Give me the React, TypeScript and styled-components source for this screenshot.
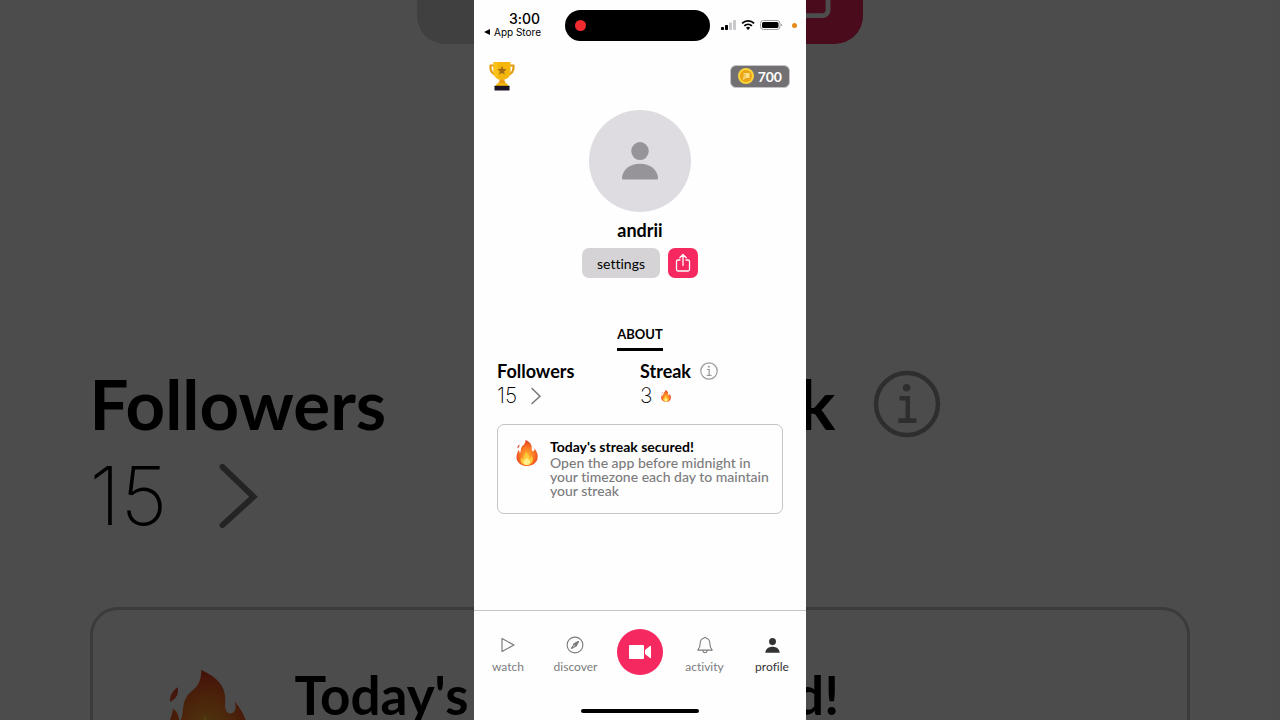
import React from "react";
import styled, { createGlobalStyle } from "styled-components";

const colors = {
  white: '#fefefe',
  black: '#000000',
  pink: '#f5285f',
  lightGray: '#d5d3d6',
  avatar: '#dedce0',
  gray: '#7b7b7d',
  border: '#c4c4c6',
  dark: '#333335',
}

interface IconProps {
  size: number;
}

const TrophyIcon: React.FC = () => (
  <svg width="28" height="30" viewBox="0 0 28 30" aria-hidden="true">
    <path d="M7 4.500H2.600c-.6 5 1.200 8.500 6.400 9.500M21 4.500h4.400c.6 5-1.200 8.500-6.400 9.500" fill="none" stroke="#e39a12" strokeWidth="2.200" />
    <path d="M5.500 1h17v9.500c0 5.500-3.500 8.500-8.500 8.500s-8.500-3-8.500-8.500z" fill="#f5b70b" />
    <path d="M5.500 1h4v16.500c-2.800-1.500-4-4-4-7z" fill="#f9c31a" />
    <path d="M11.500 18.500h5c0 2 .8 3.500 3 5.500h-11c2.200-2 3-3.500 3-5.500z" fill="#ec9c11" />
    <path d="M9 22.500h10l1.500 2.500h-13z" fill="#f7bd0b" />
    <path d="M14 5l1.300 3 3.200.3-2.400 2.100.7 3.200-2.800-1.700-2.800 1.700.7-3.200-2.400-2.100 3.200-.3z" fill="#a36b13" />
    <rect x="6.500" y="24.700" width="15" height="4.800" rx=".6" fill="#1d1326" />
  </svg>
)

const CoinIcon: React.FC = () => (
  <svg width="16" height="16" viewBox="0 0 16 16" aria-hidden="true">
    <circle cx="8" cy="8" r="8" fill="#fbd33d" />
    <circle cx="8" cy="8" r="6" fill="#eaa414" />
    <path d="M5.500 5h6v5h-3.500l-3 2z" fill="#fbe08a" />
    <path d="M4.500 7h3.500M4.500 9h3" stroke="#eaa414" strokeWidth=".8" />
  </svg>
)

const PersonIcon: React.FC<IconProps> = ({ size }) => (
  <svg width={size} height={size} viewBox="0 0 40 40" fill="currentColor" aria-hidden="true">
    <ellipse cx="20" cy="9.500" rx="9.200" ry="9.500" />
    <path d="M3 39.500C1.300 39.500.9 38.500 1.100 37 2.300 29 9.300 23 20 23S37.700 29 38.900 37c.2 1.500-.2 2.500-1.900 2.500z" />
  </svg>
)

const ShareIcon: React.FC<IconProps> = ({ size }) => (
  <svg width={size} height={size} viewBox="0 0 20 20" fill="none" stroke="currentColor" strokeWidth="1.300" strokeLinecap="round" strokeLinejoin="round" aria-hidden="true">
    <path d="M7 7H5A1.500 1.500 0 0 0 3.500 8.500v8A1.500 1.500 0 0 0 5 18h10a1.500 1.500 0 0 0 1.500-1.500v-8A1.500 1.500 0 0 0 15 7H13" />
    <path d="M10 12.500V1.500M6.800 4.700L10 1.500l3.200 3.200" />
  </svg>
)

const ChevronIcon: React.FC<IconProps> = ({ size }) => (
  <svg width={size} height={size} viewBox="0 0 18 18" fill="none" stroke="#77777a" strokeWidth="1.500" strokeLinecap="round" aria-hidden="true">
    <path d="M5 1.500L13 9.200l-8 7.300" />
  </svg>
)

const InfoIcon: React.FC<IconProps> = ({ size }) => (
  <svg width={size} height={size} viewBox="0 0 18 18" fill="none" stroke="#9a9a9d" strokeWidth="1.200" aria-hidden="true">
    <circle cx="9" cy="9" r="8.200" />
    <path d="M7 7.500h2.200v5.700M6.700 13.400h4.800" />
    <circle cx="8.900" cy="4.700" r="1" fill="#9a9a9d" stroke="none" />
  </svg>
)

const FlameIcon: React.FC<IconProps & { id: string }> = ({ size, id }) => (
  <svg width={size} height={size} viewBox="0 0 26 26" aria-hidden="true">
    <defs>
      <radialGradient id={id} cx="50%" cy="60%" r="62%">
        <stop offset="0" stopColor="#ffb52e" />
        <stop offset=".5" stopColor="#fb7a24" />
        <stop offset="1" stopColor="#dd3420" />
      </radialGradient>
    </defs>
    <path
      d="M11.500 0c5 2.200 6.600 5 6.200 8.700-.1 1.800.6 2.700 1.500 2.600 1.200-.2 1.500-1.500 1-3.100 2.600 3 3.900 6.500 3.400 9.900-.7 4.700-4.800 7.900-10.300 7.900-6 0-10.600-3.500-10.800-8.600-.1-3 1.300-4.600 1.700-7.400 1.200 1 1.600 2.100 1.600 3.500 1.500-1.600.3-4 2-6.700C9.300 4.800 11.500 4.500 11.500 0z"
      fill={`url(#${id})`}
    />
    <path d="M5.400 4.500c.3 2-.5 3-2 3.800-.1-1.600.6-2.900 2-3.800z" fill="#e04a2a" />
    <path d="M12.600 11.500c.4 3.300 3.300 3.500 3.300 6.300 1-.5 1.500-1.200 1.700-2.300 2.400 3.800 1.500 8.700-4.500 9.700-5.600-.2-7.800-3.700-5.700-8 .5 1 .9 1.500 1.700 1.800-.4-3.400 2.900-4.900 3.500-7.500z" fill="#ffc83a" />
    <path d="M13 17.500c1 1.800 3 2.300 3 4.500 0 2-1.500 3-3.300 3S9.400 23.800 9.400 21.800c0-2.100 2.800-2.200 3.600-4.300z" fill="#fff08a" />
  </svg>
)

const StatusIcons: React.FC = () => (
  <svg width="62" height="12" viewBox="0 0 62 12" aria-hidden="true">
    <rect x="0" y="8" width="3" height="3" rx=".7" />
    <rect x="4" y="6" width="3" height="5" rx=".7" />
    <rect x="8" y="3.500" width="3" height="7.500" rx=".7" fill="#c9c9cb" />
    <rect x="12" y="1" width="3" height="10" rx=".7" fill="#c9c9cb" />
    <g fill="none" stroke="#000" strokeWidth="1.800">
      <path d="M21.100 4.300a8.600 8.600 0 0 1 12 0M23.300 6.800a5.500 5.500 0 0 1 7.600 0" />
    </g>
    <path d="M27.100 11l-2.100-2.200a3 3 0 0 1 4.200 0z" />
    <rect x="39.500" y="1.500" width="19.500" height="9" rx="3" fill="none" stroke="#9c9c9f" />
    <rect x="41" y="3" width="16.500" height="6" rx="1.600" />
    <path d="M60.200 4.500c1.200.5 1.200 2.500 0 3z" fill="#9c9c9f" />
  </svg>
)

const PlayIcon: React.FC = () => (
  <svg width="18" height="18" viewBox="0 0 18 18" fill="none" stroke="currentColor" strokeWidth="1.200" strokeLinejoin="round" aria-hidden="true">
    <path d="M3 2.500v13L15 9z" />
  </svg>
)

const CompassIcon: React.FC = () => (
  <svg width="18" height="18" viewBox="0 0 18 18" fill="none" stroke="currentColor" strokeWidth="1.100" strokeLinejoin="round" aria-hidden="true">
    <circle cx="9" cy="9" r="7.900" />
    <path d="M12.500 5.500L10 10 5.500 12.500 8 8z" />
    <path d="M12.500 5.500L10 10 8 8z" fill="currentColor" />
  </svg>
)

const BellIcon: React.FC = () => (
  <svg width="18" height="18" viewBox="0 0 18 18" fill="none" stroke="currentColor" strokeWidth="1.100" strokeLinejoin="round" aria-hidden="true">
    <path d="M9 1.200c-.8 0-1.200.5-1.300 1.100C5.500 2.900 4.200 4.700 4.200 7.200c0 3.900-.9 5.100-2.400 6.900h14.400c-1.500-1.800-2.400-3-2.400-6.900 0-2.500-1.300-4.300-3.500-4.900-.1-.6-.5-1.100-1.300-1.100z" />
    <path d="M6.900 14.300c.1 3.200 4.100 3.200 4.200 0" />
  </svg>
)

const CameraIcon: React.FC = () => (
  <svg width="24" height="16" viewBox="0 0 24 16" fill="#fff" aria-hidden="true">
    <rect x="1" y="1" width="15" height="14" rx="1" />
    <path d="M17 6l5-4c.6-.4 1-.2 1 .4v11.200c0 .6-.4.8-1 .4l-5-4z" />
  </svg>
)

const Backdrop: React.FC = () => (
  <BackdropContainer aria-hidden="true">
    <BackdropActions>
      <BackdropSettings />
      <BackdropShare>
        <ShareIcon size={74} />
      </BackdropShare>
    </BackdropActions>
    <BackdropStats>
      <div>
        <BackdropTitle>Followers</BackdropTitle>
        <BackdropValue>
          15
          <ChevronIcon size={70} />
        </BackdropValue>
      </div>
      <div>
        <BackdropTitle>
          Streak
          <InfoIcon size={68} />
        </BackdropTitle>
      </div>
    </BackdropStats>
    <BackdropCard>
      <FlameIcon size={100} id="flame-backdrop" />
      <BackdropCardTitle>Today's streak secured!</BackdropCardTitle>
    </BackdropCard>
  </BackdropContainer>
)

export default function App() {
  return (
    <Page>
      <GlobalStyle />
      <Backdrop />
      <Phone>
        <StatusBar>
          <StatusLeft>
            <Time>3:00</Time>
            <BackLink href="#app-store">
              <BackArrow viewBox="0 0 6 6" aria-hidden="true"><path d="M6 0v6L0 3z" /></BackArrow>
              App Store
            </BackLink>
          </StatusLeft>
          <Island><RecordDot /></Island>
          <StatusRight>
            <StatusIcons />
            <MicDot />
          </StatusRight>
        </StatusBar>

        <TopBar>
          <IconButton aria-label="Leaderboard"><TrophyIcon /></IconButton>
          <CoinBadge><CoinIcon />700</CoinBadge>
        </TopBar>

        <Profile>
          <Avatar><PersonIcon size={38} /></Avatar>
          <Username>andrii</Username>
          <Actions>
            <SettingsButton>settings</SettingsButton>
            <ShareButton aria-label="Share profile"><ShareIcon size={20} /></ShareButton>
          </Actions>
        </Profile>

        <Tabs>
          <Tab>ABOUT</Tab>
        </Tabs>

        <Stats>
          <div>
            <StatTitle>Followers</StatTitle>
            <StatValue $gap={10}>
              15
              <ChevronIcon size={18} />
            </StatValue>
          </div>
          <div>
            <StatTitle>
              Streak
              <IconButton aria-label="About streaks"><InfoIcon size={18} /></IconButton>
            </StatTitle>
            <StatValue $gap={8}>
              3
              <FlameIcon size={12} id="flame-small" />
            </StatValue>
          </div>
        </Stats>

        <StreakCard>
          <FlameIcon size={26} id="flame-card" />
          <div>
            <CardTitle>Today's streak secured!</CardTitle>
            <CardText>Open the app before midnight in your timezone each day to maintain your streak</CardText>
          </div>
        </StreakCard>

        <BottomNav>
          <NavItem href="#watch"><PlayIcon />watch</NavItem>
          <NavItem href="#discover"><CompassIcon />discover</NavItem>
          <RecordButton aria-label="Record"><CameraIcon /></RecordButton>
          <NavItem href="#activity"><BellIcon />activity</NavItem>
          <NavItem href="#profile" $active>
            <NavIconBox><PersonIcon size={15} /></NavIconBox>
            profile
          </NavItem>
        </BottomNav>
        <HomeIndicator />
      </Phone>
    </Page>
  )
}

const GlobalStyle = createGlobalStyle`
  * {
    box-sizing: border-box;
  }

  body {
    margin: 0;
    background-color: ${colors.black};
    font-family: Lato, "Liberation Sans", sans-serif;
    font-variant-ligatures: none;
    color: ${colors.black};
  }

  h1, h2, h3, p {
    margin: 0;
  }

  button {
    border: 0;
    padding: 0;
    background: none;
    font-family: inherit;
    font-variant-ligatures: none;
    color: inherit;
    cursor: pointer;
  }

  a {
    color: inherit;
    text-decoration: none;
  }

  svg {
    display: block;
    flex-shrink: 0;
  }
`

const Page = styled.div`
  position: relative;
  display: flex;
  justify-content: center;
  min-height: 100vh;
  overflow: hidden;
`

const BackdropContainer = styled.div`
  position: absolute;
  inset: 0;
  overflow: hidden;
  background-color: #fafafa;
  opacity: 0.3;
`

const BackdropActions = styled.div`
  display: flex;
  justify-content: center;
  gap: 28px;
  margin-top: -72px;
`

const BackdropSettings = styled.div`
  width: 300px;
  height: 116px;
  border-radius: 28px;
  background-color: ${colors.lightGray};
`

const BackdropShare = styled.div`
  display: flex;
  align-items: center;
  justify-content: center;
  width: 118px;
  height: 116px;
  border-radius: 28px;
  background-color: ${colors.pink};
  color: ${colors.white};
`

const BackdropStats = styled.div`
  display: grid;
  grid-template-columns: 1fr 1fr;
  margin: 318px 7% 0;
`

const BackdropTitle = styled.div`
  display: flex;
  align-items: center;
  gap: 38px;
  font-size: 69px;
  line-height: 84px;
  font-weight: 700;
`

const BackdropValue = styled.div`
  display: flex;
  align-items: center;
  gap: 36px;
  font-family: Inter, sans-serif;
  font-size: 81px;
  line-height: 100px;
  font-weight: 200;
`

const BackdropCard = styled.div`
  display: flex;
  gap: 38px;
  height: 346px;
  margin: 61px 7% 0;
  padding: 60px 64px;
  border: 3px solid ${colors.border};
  border-radius: 28px;
`

const BackdropCardTitle = styled.div`
  font-size: 53px;
  line-height: 50px;
  font-weight: 700;
  white-space: nowrap;
`

const Phone = styled.main`
  position: relative;
  display: flex;
  flex-direction: column;
  width: 100%;
  max-width: 332px;
  min-height: 100vh;
  background-color: ${colors.white};
`

const StatusBar = styled.div`
  display: grid;
  grid-template-columns: 91px 1fr 96px;
  align-items: center;
  height: 50px;
`

const StatusLeft = styled.div`
  display: flex;
  flex-direction: column;
  padding-left: 10px;
`

const Time = styled.div`
  padding-left: 25px;
  font-family: Inter, sans-serif;
  font-size: 14px;
  line-height: 14px;
  font-weight: 500;
`

const BackLink = styled.a`
  display: flex;
  align-items: center;
  gap: 4px;
  font-family: Inter, sans-serif;
  font-size: 10px;
  line-height: 12px;
  white-space: nowrap;
`

const BackArrow = styled.svg`
  width: 6px;
  height: 6px;
`

const Island = styled.div`
  display: flex;
  align-items: center;
  height: 31px;
  padding-left: 10px;
  border-radius: 16px;
  background-color: ${colors.black};
`

const RecordDot = styled.span`
  width: 11px;
  height: 11px;
  border-radius: 50%;
  background-color: #ef2b30;
`

const StatusRight = styled.div`
  display: flex;
  align-items: center;
  justify-content: flex-end;
  gap: 9px;
  padding-right: 9px;
`

const MicDot = styled.span`
  width: 5px;
  height: 5px;
  border-radius: 50%;
  background-color: #e88a1a;
`

const TopBar = styled.header`
  display: flex;
  align-items: center;
  justify-content: space-between;
  height: 52px;
  padding: 0 16px 0 14px;
`

const IconButton = styled.button`
  display: flex;
`

const CoinBadge = styled.div`
  display: flex;
  align-items: center;
  gap: 4px;
  height: 23px;
  padding: 0 7px;
  border: 1px solid ${colors.border};
  border-radius: 6px;
  background-color: #727073;
  font-size: 14px;
  font-weight: 700;
  color: ${colors.white};
`

const Profile = styled.section`
  display: flex;
  flex-direction: column;
  align-items: center;
  padding-top: 8px;
`

const Avatar = styled.div`
  display: flex;
  align-items: center;
  justify-content: center;
  width: 102px;
  height: 102px;
  border-radius: 50%;
  background-color: ${colors.avatar};
  color: #969498;
`

const Username = styled.h1`
  margin-top: 8px;
  font-size: 18px;
  line-height: 20px;
  font-weight: 700;
`

const Actions = styled.div`
  display: flex;
  gap: 8px;
  margin-top: 8px;
`

const SettingsButton = styled.button`
  width: 78px;
  height: 30px;
  border-radius: 7px;
  background-color: ${colors.lightGray};
  font-size: 14px;
`

const ShareButton = styled.button`
  display: flex;
  align-items: center;
  justify-content: center;
  width: 30px;
  height: 30px;
  border-radius: 7px;
  background-color: ${colors.pink};
  color: ${colors.white};
`

const Tabs = styled.div`
  display: flex;
  justify-content: center;
  margin-top: 47px;
`

const Tab = styled.button`
  padding-bottom: 5px;
  border-bottom: 3px solid ${colors.black};
  font-size: 13px;
  line-height: 18px;
  font-weight: 700;
`

const Stats = styled.section`
  display: grid;
  grid-template-columns: 1fr 1fr;
  margin: 8px 23px 0;
`

const StatTitle = styled.h2`
  display: flex;
  align-items: center;
  gap: 9px;
  font-size: 18px;
  line-height: 24px;
  font-weight: 700;
`

const StatValue = styled.div<{ $gap: number }>`
  display: flex;
  align-items: center;
  gap: ${(props) => props.$gap}px;
  font-family: Inter, sans-serif;
  font-size: 21px;
  line-height: 26px;
  font-weight: 200;
`

const StreakCard = styled.section`
  display: flex;
  gap: 10px;
  margin: 15px 23px 0;
  padding: 15px 8px 15px 16px;
  border: 1px solid ${colors.border};
  border-radius: 7px;
`

const CardTitle = styled.h3`
  margin-bottom: 2px;
  font-size: 14px;
  line-height: 14px;
  font-weight: 700;
`

const CardText = styled.p`
  font-size: 14px;
  line-height: 14px;
  font-weight: 500;
  color: ${colors.gray};
`

const BottomNav = styled.nav`
  display: grid;
  grid-template-columns: 68fr 67fr 62fr 67fr 68fr;
  align-items: center;
  justify-items: center;
  height: 82px;
  margin-top: auto;
  border-top: 1px solid ${colors.border};
`

const NavItem = styled.a<{ $active?: boolean }>`
  display: flex;
  flex-direction: column;
  align-items: center;
  gap: 5px;
  padding-top: 8px;
  font-size: 12px;
  line-height: 16px;
  color: ${(props) => (props.$active ? colors.dark : colors.gray)};
`

const NavIconBox = styled.span`
  display: flex;
  align-items: center;
  justify-content: center;
  height: 18px;
`

const RecordButton = styled.button`
  display: flex;
  align-items: center;
  justify-content: center;
  width: 46px;
  height: 46px;
  border-radius: 50%;
  background-color: ${colors.pink};
`

const HomeIndicator = styled.div`
  width: 118px;
  height: 4px;
  margin: 17px auto 7px;
  border-radius: 2px;
  background-color: ${colors.black};
`
